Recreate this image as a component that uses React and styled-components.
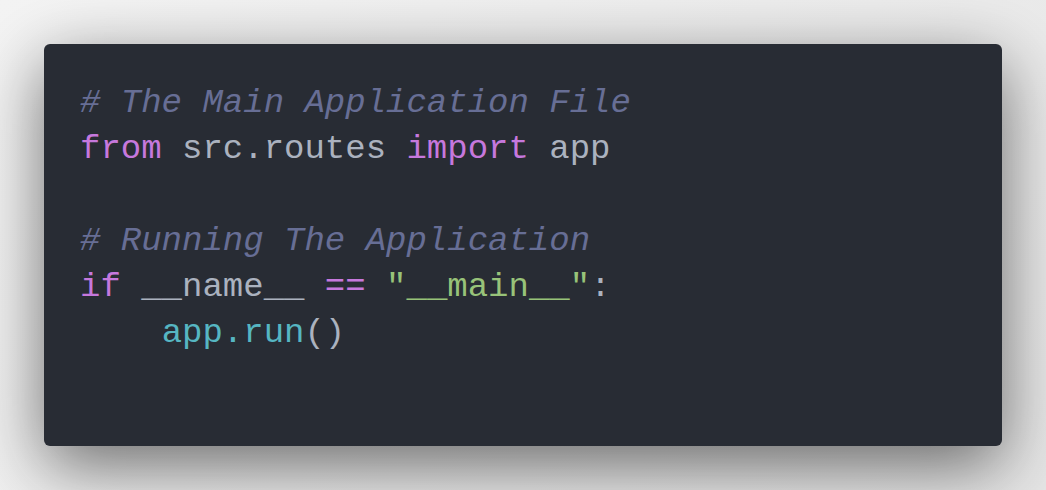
import styled, { createGlobalStyle } from "styled-components";

const GlobalStyle = createGlobalStyle`
  html, body {
    margin: 0;
    padding: 0;
  }
  body {
    background: linear-gradient(135deg, #f4f4f4 0%, #e6e6e6 100%);
    min-height: 490px;
  }
`;

const Stage = styled.div`
  padding: 44px;
  box-sizing: border-box;
  width: 1046px;
  height: 490px;
`;

const Window = styled.div`
  box-sizing: border-box;
  height: 402px;
  background: #282c34;
  border-radius: 6px;
  padding: 36px;
  box-shadow: 0 20px 68px rgba(0, 0, 0, 0.55);
`;

const Code = styled.pre`
  margin: 0;
  font-family: "Liberation Mono", "DejaVu Sans Mono", monospace;
  font-size: 34px;
  line-height: 46px;
  color: #abb2bf;
`;

const Line = styled.div`
  height: 46px;
  white-space: pre;
`;

const Token = styled.span`
  color: ${({ kind }) =>
    ({
      comment: "#676e95",
      keyword: "#c678dd",
      string: "#98c379",
      call: "#56b6c2",
      plain: "#abb2bf",
    }[kind])};
  font-style: ${({ kind }) => (kind === "comment" ? "italic" : "normal")};
`;

const lines = [
  [["comment", "# The Main Application File"]],
  [
    ["keyword", "from"],
    ["plain", " src.routes "],
    ["keyword", "import"],
    ["plain", " app"],
  ],
  [],
  [["comment", "# Running The Application"]],
  [
    ["keyword", "if"],
    ["plain", " __name__ "],
    ["keyword", "=="],
    ["plain", " "],
    ["string", "\"__main__\""],
    ["plain", ":"],
  ],
  [
    ["plain", "    "],
    ["call", "app.run"],
    ["plain", "()"],
  ],
];

const App = () => (
  <>
    <GlobalStyle />
    <Stage>
      <Window>
        <Code>
          {lines.map((tokens, i) => (
            <Line key={i}>
              {tokens.map(([kind, text], j) => (
                <Token key={j} kind={kind}>
                  {text}
                </Token>
              ))}
            </Line>
          ))}
        </Code>
      </Window>
    </Stage>
  </>
);

export default App;
